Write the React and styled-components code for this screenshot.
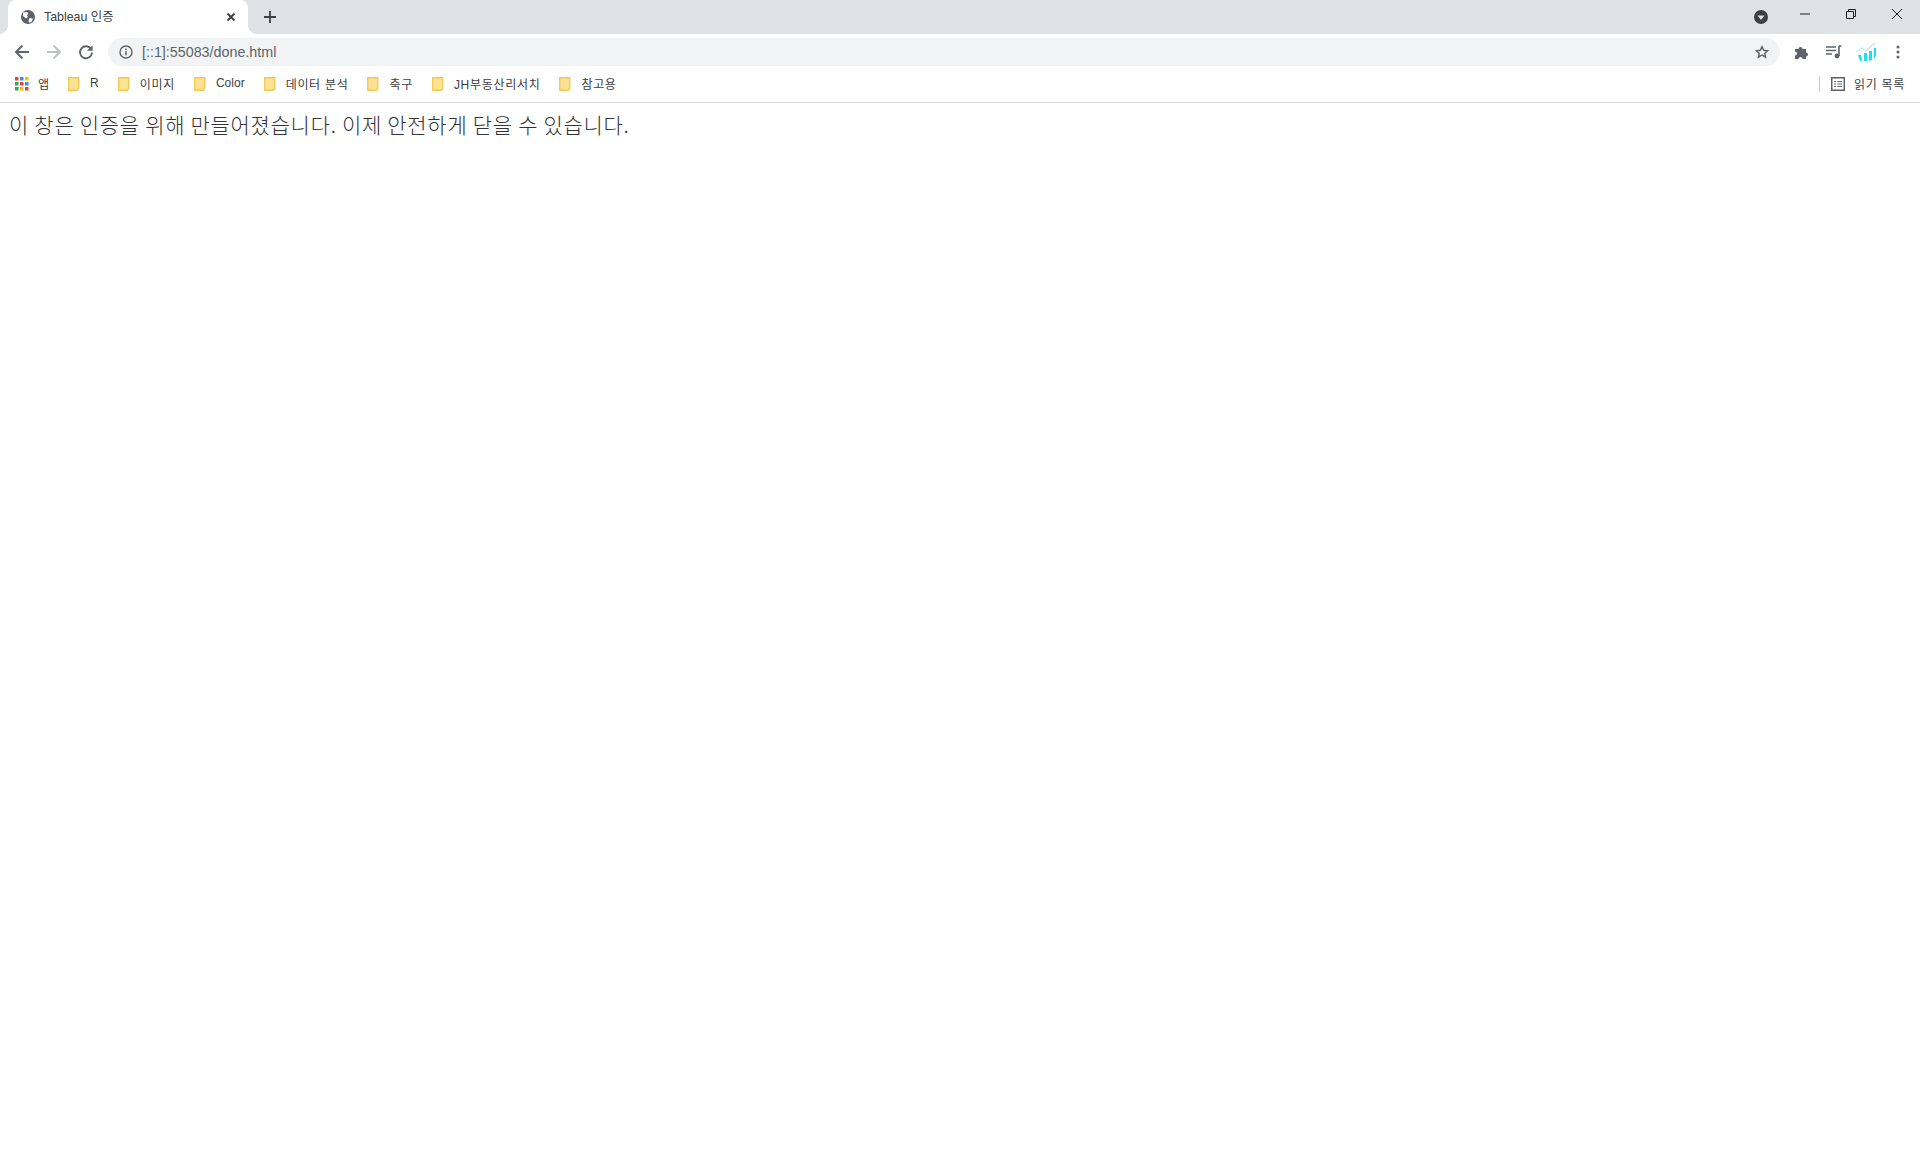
import React from 'react';
import styled, { createGlobalStyle } from 'styled-components';

const GlobalStyle = createGlobalStyle`
  html, body {
    margin: 0;
    padding: 0;
    background: #fff;
  }
`;

const Page = styled.div`
  width: 1920px;
  height: 1160px;
  overflow: hidden;
  background: #fff;
  font-family: "Liberation Sans", "Noto Sans CJK KR", sans-serif;
`;

const TabStrip = styled.div`
  height: 34px;
  background: #dee1e6;
  display: flex;
  align-items: flex-end;
  padding-left: 8px;
`;

const Tab = styled.div`
  width: 240px;
  height: 34px;
  box-sizing: border-box;
  background: #fff;
  border-radius: 8px 8px 0 0;
  display: flex;
  align-items: center;
  padding: 0 9px 0 12px;
  position: relative;
  &::before, &::after {
    content: "";
    position: absolute;
    bottom: 0;
    width: 8px;
    height: 8px;
  }
  &::before {
    left: -8px;
    background: radial-gradient(circle at 0 0, #dee1e6 7.5px, #fff 8px);
  }
  &::after {
    right: -8px;
    background: radial-gradient(circle at 100% 0, #dee1e6 7.5px, #fff 8px);
  }
`;

const TabTitle = styled.span`
  flex: 1;
  margin-left: 8px;
  padding-bottom: 2px;
  font-size: 12.4px;
  color: #3c4043;
  white-space: nowrap;
`;

const IconSlot = styled.div`
  width: 16px;
  height: 16px;
  flex: none;
  display: flex;
  align-items: center;
  justify-content: center;
`;

const NewTab = styled(IconSlot)`
  margin-left: 14px;
  height: 34px;
`;

const WindowArea = styled.div`
  margin-left: auto;
  display: flex;
  align-items: flex-start;
  height: 34px;
`;

const WindowBtn = styled.div`
  width: 46px;
  height: 28px;
  display: flex;
  align-items: center;
  justify-content: center;
`;

const ProfileDot = styled.div`
  width: 14px;
  height: 14px;
  margin: 10px 14px 0 0;
  display: flex;
`;

const Toolbar = styled.div`
  height: 36px;
  background: #fff;
  display: flex;
  align-items: center;
  padding-left: 6px;
`;

const NavBtn = styled.div`
  width: 32px;
  height: 28px;
  display: flex;
  align-items: center;
  justify-content: center;
`;

const Omnibox = styled.div`
  width: 1672px;
  height: 28px;
  margin-left: 6px;
  border-radius: 14px;
  background: #f1f3f4;
  display: flex;
  align-items: center;
  padding: 0 11px 0 11px;
  box-sizing: border-box;
`;

const UrlText = styled.span`
  flex: 1;
  margin-left: 9px;
  font-size: 14.3px;
  color: #5f6368;
`;

const ExtArea = styled.div`
  display: flex;
  align-items: center;
  margin-left: 6px;
`;

const ExtBtn = styled.div`
  width: 32px;
  height: 28px;
  display: flex;
  align-items: center;
  justify-content: center;
`;

const BookmarkBar = styled.div`
  height: 33px;
  box-sizing: border-box;
  background: #fff;
  border-bottom: 1px solid #dadce0;
  display: flex;
  align-items: center;
  padding: 0 0 5px 15px;
`;

const Bookmark = styled.div`
  display: flex;
  align-items: center;
  margin-right: 19px;
`;

const BookmarkLabel = styled.span`
  margin-left: ${(p) => p.$ml || 10}px;
  padding-bottom: 1px;
  font-size: 12px;
  letter-spacing: ${(p) => (p.$ko ? 0.7 : 0)}px;
  color: #3c4043;
  white-space: nowrap;
`;

const ReadingList = styled.div`
  margin-left: auto;
  display: flex;
  align-items: center;
  padding-right: 15px;
`;

const Divider = styled.div`
  width: 1px;
  height: 16px;
  background: #c8cacd;
  margin-right: 11px;
`;

const Message = styled.p`
  margin: 0;
  padding: 8px 9px;
  font-family: "Noto Sans CJK KR", sans-serif;
  font-size: 21px;
  line-height: 27px;
  font-weight: 300;
  letter-spacing: 0.7px;
  color: #333;
  white-space: nowrap;
`;

const Globe = () => (
  <svg width="16" height="16" viewBox="0 0 16 16">
    <circle cx="8" cy="8" r="7" fill="#5f6368" />
    <path d="M3 3.500 7 3l1.500 1.500L7 6.500 8 8 6 9.500 3 7z M9.500 9l3.500 .5-1.500 3.500-2.500 .5-.5-2z" fill="#fff" />
  </svg>
);

const Close = () => (
  <svg width="10" height="10" viewBox="0 0 10 10">
    <path d="M1.500 1.500l7 7M8.500 1.500l-7 7" stroke="#3c4043" strokeWidth="1.800" />
  </svg>
);

const Plus = () => (
  <svg width="12" height="12" viewBox="0 0 12 12">
    <path d="M6 0v12M0 6h12" stroke="#3c4043" strokeWidth="1.800" />
  </svg>
);

const Back = ({ color }) => (
  <svg width="16" height="16" viewBox="0 0 16 16">
    <path d="M15 8H2.500M8.500 1.500 2 8l6.500 6.500" fill="none" stroke={color} strokeWidth="2" />
  </svg>
);

const Forward = ({ color }) => (
  <svg width="16" height="16" viewBox="0 0 16 16">
    <path d="M1 8h12.500M7.500 1.500 14 8l-6.500 6.500" fill="none" stroke={color} strokeWidth="2" />
  </svg>
);

const Reload = () => (
  <svg width="16" height="16" viewBox="0 0 16 16">
    <path d="M13.200 5.200A6 6 0 1 0 14 8.500" fill="none" stroke="#5f6368" strokeWidth="1.900" />
    <path d="M14.600 1.200v5.600H9z" fill="#5f6368" />
  </svg>
);

const Info = () => (
  <svg width="14" height="14" viewBox="0 0 14 14">
    <circle cx="7" cy="7" r="6" fill="none" stroke="#5f6368" strokeWidth="1.400" />
    <path d="M7 6.200v4M7 3.600v1.400" stroke="#5f6368" strokeWidth="1.500" />
  </svg>
);

const Star = () => (
  <svg width="14" height="14" viewBox="0 0 16 16">
    <path d="M8 1.800l1.900 4.200 4.600.5-3.400 3.100.9 4.500L8 11.400l-4 2.700.9-4.500L1.500 6.500l4.600-.5z" fill="none" stroke="#5f6368" strokeWidth="1.600" />
  </svg>
);

const Puzzle = () => (
  <svg width="16" height="16" viewBox="0 0 16 16">
    <path d="M1 5h3.500a2 2 0 1 1 4 0H12v3.500a2 2 0 1 1 0 4V15H8.500a2 2 0 1 0-4 0H1v-3.500a2 2 0 1 0 0-4z" fill="#5f6368" />
  </svg>
);

const Media = () => (
  <svg width="16" height="14" viewBox="0 0 16 14">
    <path d="M0 2h10M0 5.500h10M0 9h6" stroke="#5f6368" strokeWidth="1.300" />
    <path d="M13 1h2.500M13 1v10" stroke="#5f6368" strokeWidth="1.600" fill="none" />
    <circle cx="11" cy="11" r="2.400" fill="#5f6368" />
  </svg>
);

const Chart = () => (
  <svg width="22" height="20" viewBox="0 0 22 20">
    <path d="M1 10l6-4 4 3 9-8" fill="none" stroke="#cfe6f2" strokeWidth="1.500" />
    <path d="M3 13h3l1 6H5zM9 11h3v8H9zM14 9h3v9l-3 1zM19 6h2v8l-2 3z" fill="#1fdcf0" />
  </svg>
);

const Dots = () => (
  <svg width="4" height="14" viewBox="0 0 4 14">
    <circle cx="2" cy="2" r="1.500" fill="#5f6368" />
    <circle cx="2" cy="7" r="1.500" fill="#5f6368" />
    <circle cx="2" cy="12" r="1.500" fill="#5f6368" />
  </svg>
);

const Apps = () => {
  const colors = ['#ea4335', '#4285f4', '#fbbc04', '#34a853', '#ea4335', '#4285f4', '#34a853', '#fbbc04', '#ea4335'];
  return (
    <svg width="14" height="14" viewBox="0 0 14 14">
      {colors.map((c, i) => (
        <rect key={i} x={(i % 3) * 5} y={Math.floor(i / 3) * 5} width="3.500" height="3.500" fill={c} />
      ))}
    </svg>
  );
};

const Folder = () => (
  <svg width="12" height="14" viewBox="0 0 12 14">
    <path d="M.75.75h10v10.500l-1.500 2H.75z" fill="#fde293" stroke="#f2c94c" strokeWidth="1.300" />
  </svg>
);

const ListIcon = () => (
  <svg width="14" height="14" viewBox="0 0 14 14">
    <rect x=".75" y=".75" width="12.500" height="12.500" fill="none" stroke="#5f6368" strokeWidth="1.500" />
    <path d="M3 4.500h2M3 7h2M3 9.500h2M6.500 4.500H11M6.500 7H11M6.500 9.500H11" stroke="#5f6368" strokeWidth="1.200" />
  </svg>
);

const bookmarks = [
  { label: 'R' },
  { label: '이미지', ko: true },
  { label: 'Color' },
  { label: '데이터 분석', ko: true },
  { label: '축구', ko: true },
  { label: 'JH부동산리서치', ko: true },
  { label: '참고용', ko: true },
];

const App = () => (
  <Page>
    <GlobalStyle />
    <TabStrip>
      <Tab>
        <Globe />
        <TabTitle>Tableau 인증</TabTitle>
        <IconSlot><Close /></IconSlot>
      </Tab>
      <NewTab><Plus /></NewTab>
      <WindowArea>
        <ProfileDot>
          <svg width="14" height="14" viewBox="0 0 14 14">
            <circle cx="7" cy="7" r="7" fill="#3c4043" />
            <path d="M3.500 5.500h7L7 10z" fill="#dee1e6" />
          </svg>
        </ProfileDot>
        <WindowBtn>
          <svg width="10" height="10" viewBox="0 0 10 10"><path d="M0 5h10" stroke="#1f1f1f" strokeWidth="1" /></svg>
        </WindowBtn>
        <WindowBtn>
          <svg width="10" height="10" viewBox="0 0 10 10">
            <path d="M.5 2.500h7v7h-7zM2.500 2.500v-2h7v7h-2" fill="none" stroke="#1f1f1f" strokeWidth="1" />
          </svg>
        </WindowBtn>
        <WindowBtn>
          <svg width="10" height="10" viewBox="0 0 10 10"><path d="M0 0l10 10M10 0L0 10" stroke="#1f1f1f" strokeWidth="1" /></svg>
        </WindowBtn>
      </WindowArea>
    </TabStrip>
    <Toolbar>
      <NavBtn><Back color="#5f6368" /></NavBtn>
      <NavBtn><Forward color="#bdc1c6" /></NavBtn>
      <NavBtn><Reload /></NavBtn>
      <Omnibox>
        <Info />
        <UrlText>[::1]:55083/done.html</UrlText>
        <Star />
      </Omnibox>
      <ExtArea>
        <ExtBtn><Puzzle /></ExtBtn>
        <ExtBtn><Media /></ExtBtn>
        <ExtBtn><Chart /></ExtBtn>
        <ExtBtn><Dots /></ExtBtn>
      </ExtArea>
    </Toolbar>
    <BookmarkBar>
      <Bookmark>
        <Apps />
        <BookmarkLabel $ml={9}>앱</BookmarkLabel>
      </Bookmark>
      {bookmarks.map((b) => (
        <Bookmark key={b.label}>
          <Folder />
          <BookmarkLabel $ko={b.ko}>{b.label}</BookmarkLabel>
        </Bookmark>
      ))}
      <ReadingList>
        <Divider />
        <ListIcon />
        <BookmarkLabel $ml={9} $ko>읽기 목록</BookmarkLabel>
      </ReadingList>
    </BookmarkBar>
    <Message>이 창은 인증을 위해 만들어졌습니다. 이제 안전하게 닫을 수 있습니다.</Message>
  </Page>
);

export default App;
